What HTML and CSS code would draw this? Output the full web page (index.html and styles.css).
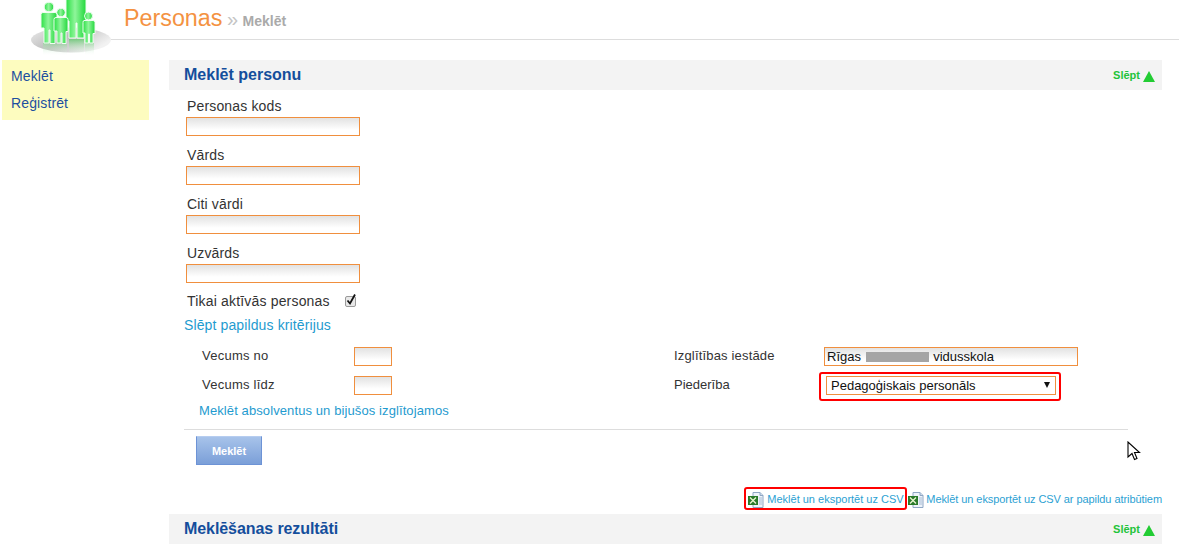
FILE: index.html
```html
<!DOCTYPE html>
<html lang="lv">
<head>
<meta charset="utf-8">
<title>Personas</title>
<link rel="stylesheet" href="styles.css">
</head>
<body>
<header class="top">
  <svg class="logo" width="82" height="56" viewBox="0 0 82 56">
    <defs>
      <linearGradient id="disc" x1="0" y1="0" x2="1" y2="0.5"><stop offset="0" stop-color="#ececec"/><stop offset="0.5" stop-color="#bdbdbd"/><stop offset="1" stop-color="#f2f2f2"/></linearGradient>
      <linearGradient id="man" x1="0" y1="0" x2="1" y2="0"><stop offset="0" stop-color="#2be045"/><stop offset="0.45" stop-color="#8ff59a"/><stop offset="1" stop-color="#22d83c"/></linearGradient>
      <linearGradient id="fade" x1="0" y1="0" x2="0" y2="1"><stop offset="0" stop-color="#63c96e" stop-opacity=".8"/><stop offset="1" stop-color="#fff" stop-opacity="0"/></linearGradient>
    </defs>
    <ellipse cx="40" cy="40" rx="40" ry="12.500" fill="url(#disc)"/>
    <path d="M12 43h13v12H12zM25 44h11v12H25zM38 39h15v14H38zM54 43h9v12h-9z" fill="url(#fade)"/>
    <g fill="url(#man)" stroke="#eefdf0" stroke-width="1">
      <path d="M37 -3h16q2 0 2 2v22h-2v17h-7V23h-1v15h-7V21h-3V-1q0-2 2-2z"/>
      <circle cx="18" cy="7" r="4.800"/>
      <path d="M12 12.500h12q2 0 2 2v14h-2v15h-5V30h-1v13h-5V28h-3V14.500q0-2 2-2z"/>
      <circle cx="30" cy="12.500" r="4.200"/>
      <path d="M25 17.500h10q2 0 2 2v12h-2v12h-4V33h-1v10h-4V31h-3V19.500q0-2 2-2z"/>
      <circle cx="57.500" cy="16" r="4"/>
      <path d="M53 20.500h9q2 0 2 2v11h-2v9.500h-3.500V34h-1v9H54V33h-2V22.500q0-2 1-2z"/>
    </g>
  </svg>
  <h1 class="title">Personas <span class="crumb-sep">»</span> <span class="crumb">Meklēt</span></h1>
</header>
<div class="page">
  <nav class="side">
    <a href="#">Meklēt</a>
    <a href="#">Reģistrēt</a>
  </nav>
  <main class="content">
    <section class="bar">
      <h2>Meklēt personu</h2>
      <a class="toggle" href="#">Slēpt <svg class="tri" width="12" height="11" viewBox="0 0 12 11"><path d="M6 0l6 11H0z" fill="#22cc33"/></svg></a>
    </section>
    <form class="form">
      <label class="field">Personas kods<input class="inp wide" type="text"></label>
      <label class="field">Vārds<input class="inp wide" type="text"></label>
      <label class="field">Citi vārdi<input class="inp wide" type="text"></label>
      <label class="field">Uzvārds<input class="inp wide" type="text"></label>
      <div class="check"><span>Tikai aktīvās personas</span>
        <svg class="cb" width="13" height="13" viewBox="0 0 13 13"><rect x=".5" y="2.500" width="10" height="10" rx="1.500" fill="#e8e8e8" stroke="#9a9a9a"/><path d="M2.500 6.500l2.500 3 5-9" fill="none" stroke="#111" stroke-width="1.800"/></svg>
      </div>
      <a class="more" href="#">Slēpt papildus kritērijus</a>
      <div class="extra">
        <div class="col left">
          <div class="row"><span class="lbl">Vecums no</span><input class="inp tiny" type="text"></div>
          <div class="row"><span class="lbl">Vecums līdz</span><input class="inp tiny" type="text"></div>
          <a class="grad" href="#">Meklēt absolventus un bijušos izglītojamos</a>
        </div>
        <div class="col right">
          <div class="row"><span class="lbl2">Izglītības iestāde</span>
            <div class="inp school">Rīgas <span class="redact"></span> vidusskola</div></div>
          <div class="row"><span class="lbl2 short">Piederība</span>
            <div class="redbox select-box"><div class="inp select">Pedagoģiskais personāls<span class="arrow"></span></div></div></div>
        </div>
      </div>
      <div class="actions"><button class="btn" type="button">Meklēt</button></div>
    </form>
    <div class="exports">
      <a class="redbox export first" href="#"><svg class="xls" width="16" height="16" viewBox="0 0 16 16"><path d="M5 .5h7l3 3v12H5z" fill="#eef3fa" stroke="#8fa6c4"/><path d="M12 .5v3h3" fill="#cfdcec" stroke="#8fa6c4"/><path d="M11 6h3M11 8h3M11 10h3M11 12h3" stroke="#a9bcd4"/><rect x="0" y="4" width="10" height="9" fill="#2a7a2a"/><path d="M2 5.500l6 6M8 5.500l-6 6" stroke="#e8f5d0" stroke-width="1.400"/></svg>Meklēt un eksportēt uz CSV</a>
      <a class="export second" href="#"><svg class="xls" width="16" height="16" viewBox="0 0 16 16"><path d="M5 .5h7l3 3v12H5z" fill="#eef3fa" stroke="#8fa6c4"/><path d="M12 .5v3h3" fill="#cfdcec" stroke="#8fa6c4"/><path d="M11 6h3M11 8h3M11 10h3M11 12h3" stroke="#a9bcd4"/><rect x="0" y="4" width="10" height="9" fill="#2a7a2a"/><path d="M2 5.500l6 6M8 5.500l-6 6" stroke="#e8f5d0" stroke-width="1.400"/></svg>Meklēt un eksportēt uz CSV ar papildu atribūtiem</a>
    </div>
    <section class="bar">
      <h2 class="tight">Meklēšanas rezultāti</h2>
      <a class="toggle" href="#">Slēpt <svg class="tri" width="12" height="11" viewBox="0 0 12 11"><path d="M6 0l6 11H0z" fill="#22cc33"/></svg></a>
    </section>
  </main>
</div>
<svg class="cursor" width="14" height="21" viewBox="0 0 14 21"><path d="M1 1v15l4-3.500 2.500 6 2.500-1-2.500-6h5z" fill="#fff" stroke="#000" stroke-width="1.100"/></svg>
</body>
</html>
```
FILE: styles.css
```css
* { box-sizing: border-box; }
html, body { margin: 0; padding: 0; }
body { width: 1179px; height: 559px; overflow: hidden; background: #fff; position: relative; font-family: "Liberation Sans", Arial, sans-serif; color: #333; font-size: 14px; }
a { text-decoration: none; color: #1f9bcf; }
.top { height: 40px; border-bottom: 1px solid #ddd; margin-left: 110px; padding-left: 14px; position: relative; }
.logo { position: absolute; left: -79px; top: 0; }
.title { margin: 0; font-size: 23.300px; font-weight: 400; color: #f49242; line-height: 36px; }
.crumb-sep { color: #c4c4c4; font-size: 20px; margin-left: -2px; }
.crumb { color: #aaa; font-size: 14px; font-weight: 700; margin-left: -2px; }
.page { display: flex; align-items: flex-start; padding: 20px 17px 0 2px; gap: 20px; }
.side { width: 147px; height: 60px; background: #fdfcbf; padding: 3px 9px; display: flex; flex-direction: column; flex: none; }
.side a { color: #1d4f9f; font-size: 14px; line-height: 27px; letter-spacing: .12px; }
.content { flex: 1; min-width: 0; }
.bar { height: 30px; background: #f3f3f3; display: flex; align-items: center; justify-content: space-between; padding: 0 7px 0 15px; }
.bar h2 { margin: 0; font-size: 16px; font-weight: 700; color: #144e9c; }
.bar h2.tight { letter-spacing: -.08px; }
.toggle { color: #22c33a; font-size: 11px; font-weight: 700; display: flex; align-items: center; gap: 3px; }
.tri { margin-top: 3px; }
.form { padding: 8px 0 0 17px; }
.field { display: flex; flex-direction: column; align-items: flex-start; line-height: 16px; height: 49px; padding-left: 1px; letter-spacing: .15px; }
.inp { border: 1px solid #f08f3e; background: linear-gradient(#e2e2e2, #fff 70%); height: 19px; padding: 0; display: block; border-radius: 0; }
.wide { width: 174px; margin: 3px 0 0 -1px; }
.check { display: flex; align-items: center; height: 20px; padding-left: 1px; gap: 15px; margin-top: -3px; letter-spacing: .18px; }
.cb { margin-top: -1px; }
.more { display: block; margin: 6px 0 0 -2px; line-height: 16px; letter-spacing: .12px; }
.extra { display: flex; margin-top: 14px; font-size: 13px; }
.col .row { display: flex; align-items: flex-start; }
.left { width: 488px; padding-left: 16px; }
.left .row { height: 19px; margin-bottom: 10px; }
.lbl { width: 152px; line-height: 17px; letter-spacing: .25px; }
.tiny { width: 38px; }
.grad { display: block; margin: -2px 0 0 -3px; line-height: 15px; letter-spacing: .1px; }
.right .row { height: 29px; }
.lbl2 { width: 150px; line-height: 17px; letter-spacing: .17px; }
.lbl2.short { letter-spacing: 0; }
.school { width: 254px; font-size: 13px; color: #111; line-height: 17px; padding-left: 2px; }
.redact { display: inline-block; width: 63px; height: 10px; background: #a5a5a5; vertical-align: -1px; margin: 0 1px 0 1px; }
.redbox { border: 2px solid #f00; border-radius: 3px; }
.select-box { padding: 2px 3px 4px 5px; margin: -4px 0 0 -5px; width: 242px; height: 29px; flex: none; }
.select { width: 230px; background: #fff; color: #111; padding-left: 4px; line-height: 17px; position: relative; font-size: 13px; }
.arrow { position: absolute; right: 5px; top: 5px; border: 3.500px solid transparent; border-top: 6px solid #111; border-bottom: 0; }
.actions { margin: 11px 0 0 -2px; width: 944px; border-top: 1px solid #ddd; padding: 6px 0 0 12px; }
.btn { width: 66px; height: 29px; border: 1px solid #6d93d6; border-top-color: #b6cdf0; background: linear-gradient(#a7c3ea, #7b9fd8); color: #fff; font: 700 11px "Liberation Sans", Arial, sans-serif; padding: 0; display: block; }
.exports { display: flex; justify-content: flex-end; align-items: flex-start; margin: 22px 0 4px; font-size: 11px; height: 23px; }
.export { display: flex; align-items: center; height: 23px; color: #2ba1d3; }
.first { padding: 0 0 0 2px; width: 163px; }
.second { letter-spacing: -.07px; padding-left: 1px; }
.xls { flex: none; margin: 3px 3px 0 0; }
.second .xls { margin-right: 2px; }
.cursor { position: absolute; left: 1127px; top: 441px; }
```
